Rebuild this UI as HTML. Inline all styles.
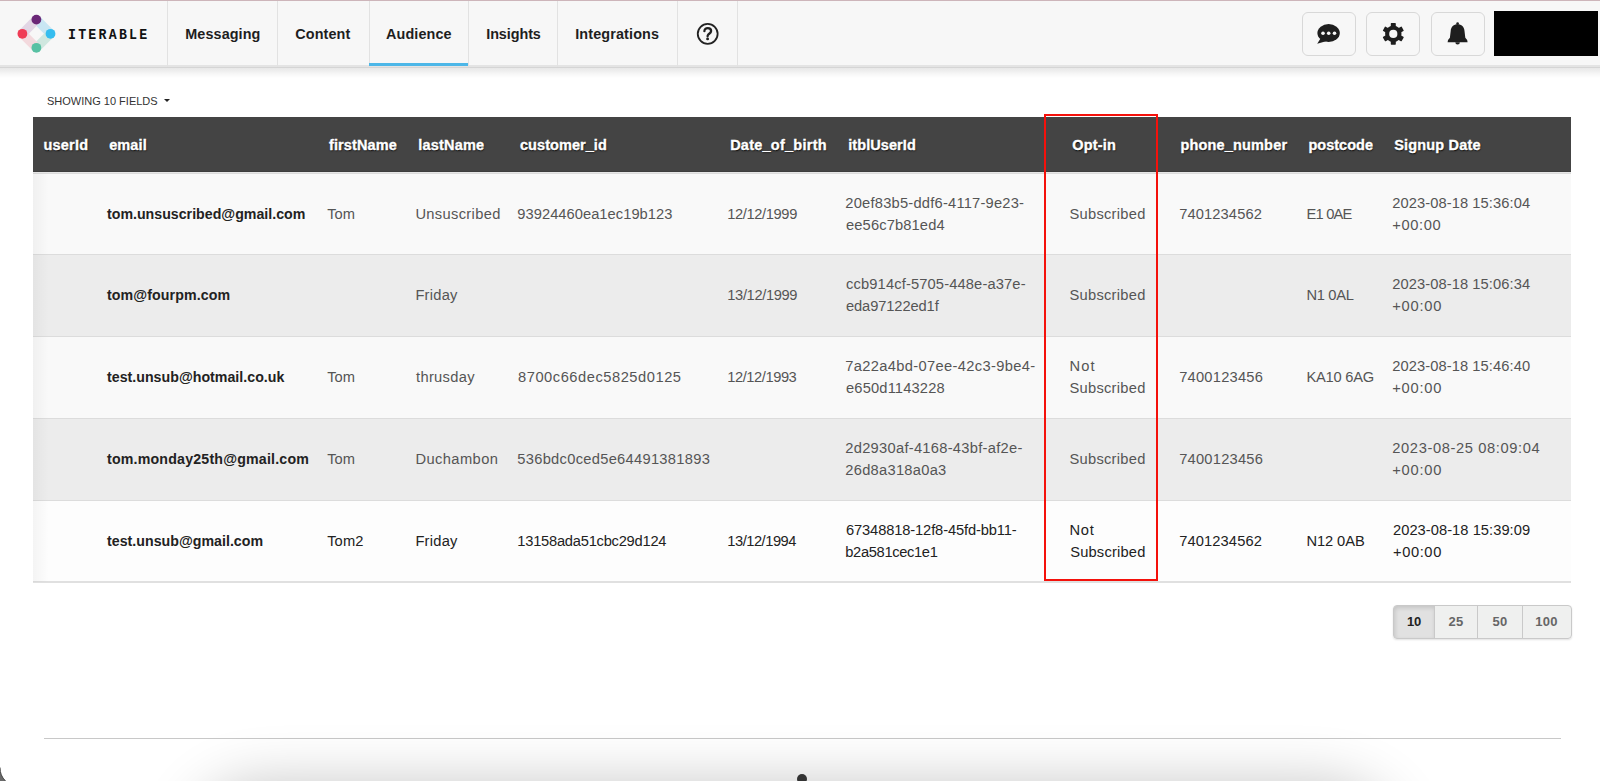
<!DOCTYPE html>
<html><head><meta charset="utf-8"><title>Iterable</title>
<style>
*{box-sizing:border-box}
html,body{margin:0;padding:0}
body{width:1600px;height:781px;overflow:hidden;position:relative;background:#fff;font-family:"Liberation Sans",sans-serif}
.topline{position:absolute;left:0;top:0;width:1600px;height:1px;background:#cdb5ba;z-index:5}
.nav{position:absolute;left:0;top:0;width:1600px;height:68px;background:#f7f7f7;border-bottom:1px solid #d5d5d5;box-shadow:inset 0 -2px 0 #e4e4e4}
.navsh{position:absolute;left:0;top:68px;width:1600px;height:10px;background:linear-gradient(#e8e8e8,#efefef 30%,#f7f7f7 60%,#fff)}
.dv{position:absolute;top:1px;width:1px;height:66px;background:#e2e2e2}
.n{position:absolute;white-space:nowrap;font-weight:bold;font-size:14.4px;line-height:20px;color:#1e1e1e}
.uline{position:absolute;left:369px;top:63px;width:99px;height:3.4px;background:#4db7e8}
.btn{position:absolute;top:12px;width:53.6px;height:43.8px;border:1px solid #d8d8d8;border-radius:6px;background:#f7f7f7}
.btn svg{position:absolute;left:0;top:0}
.blk{position:absolute;left:1494px;top:11px;width:104px;height:45px;background:#000}
.cap{position:absolute;left:47px;top:93.7px;font-size:11px;line-height:14px;color:#333;white-space:nowrap}
.hdr{position:absolute;left:33px;top:117px;width:1538px;height:55px;background:#444;border-bottom:1px solid #3d3d3d}
.hline{position:absolute;left:33px;top:172px;width:1538px;height:1px;background:#e6e6e6}
.h{position:absolute;white-space:nowrap;font-weight:bold;font-size:14.5px;line-height:20px;color:#fff;-webkit-text-stroke:0.35px #fff;text-shadow:0.5px 1px 1.5px rgba(0,0,0,0.95)}
.row{position:absolute;left:33px;width:1538px;border-top:1px solid #dcdcdc}
.lastb{position:absolute;left:33px;top:581px;width:1538px;height:2px;background:#e0e0e0}
.lshadow{position:absolute;left:33px;top:173px;width:16px;height:409px;background:linear-gradient(to right,rgba(0,0,0,0.035),rgba(0,0,0,0))}
.c{position:absolute;white-space:nowrap;font-size:14.7px;line-height:20px;color:#555}
.c.e{font-weight:bold;font-size:14.2px;color:#222}
.red{position:absolute;left:1044px;top:114px;width:114px;height:467px;border:2px solid #f4110b}
.pgw{position:absolute;left:1393px;top:604.5px;width:178.5px;height:34px;border-radius:4px;box-shadow:0 1px 2px rgba(0,0,0,0.12)}
.pg{position:absolute;top:604.5px;height:34px;border:1px solid #c9c9c9;background:#eff0ef;font-weight:bold;font-size:13px;letter-spacing:0.3px;color:#666;text-align:center;line-height:31px}
.bshadow{position:absolute;left:212px;top:805px;width:1163px;height:100px;border-radius:50px;box-shadow:0 0 60px 20px rgba(0,0,0,0.24)}
.bline{position:absolute;left:44px;top:738px;width:1517px;height:1px;background:#c8c8c8}
</style></head><body>
<div class="nav">
<div class="dv" style="left:167px"></div><div class="dv" style="left:277px"></div><div class="dv" style="left:369px"></div><div class="dv" style="left:468px"></div><div class="dv" style="left:557px"></div><div class="dv" style="left:677px"></div><div class="dv" style="left:737px"></div>
<svg style="position:absolute;left:14px;top:12px" width="46" height="44" viewBox="14 12 46 44">
  <g stroke-width="9.2" stroke-linecap="butt">
    <line x1="36.4" y1="19.6" x2="50.5" y2="33.8" stroke="#c9e6f3"/>
    <line x1="50.5" y1="33.8" x2="36.4" y2="47.8" stroke="#cfe7df"/>
    <line x1="36.4" y1="47.8" x2="22.4" y2="33.8" stroke="#f3d9dd"/>
    <line x1="22.4" y1="33.8" x2="36.4" y2="19.6" stroke="#e2d6e5"/>
  </g>
  <circle cx="36.4" cy="19.6" r="4.9" fill="#6a2777"/>
  <circle cx="50.5" cy="33.8" r="4.9" fill="#36bdef"/>
  <circle cx="36.4" cy="47.8" r="4.9" fill="#58c1a3"/>
  <circle cx="22.4" cy="33.8" r="4.9" fill="#ef3b55"/>
</svg>
<div style="position:absolute;left:67.6px;top:24.5px;font-family:'Liberation Mono',monospace;font-weight:bold;font-size:15.4px;line-height:20px;letter-spacing:2.6px;color:#111;white-space:nowrap;transform:scaleX(0.86);transform-origin:0 0"><span class="t">ITERABLE</span></div>
<div class="n" style="left:185.30px;top:23.91px;letter-spacing:0.087px"><span class="t">Messaging</span></div><div class="n" style="left:295.23px;top:23.91px;letter-spacing:0.117px"><span class="t">Content</span></div><div class="n" style="left:386.07px;top:23.91px;letter-spacing:0.100px"><span class="t">Audience</span></div><div class="n" style="left:486.23px;top:23.91px;letter-spacing:-0.075px"><span class="t">Insights</span></div><div class="n" style="left:575.23px;top:23.91px;letter-spacing:0.127px"><span class="t">Integrations</span></div>
<div class="uline"></div>
<svg style="position:absolute;left:696px;top:23px" width="23" height="23" viewBox="0 0 23 23">
  <circle cx="11.7" cy="10.85" r="9.95" fill="none" stroke="#222" stroke-width="1.8"/>
  <path d="M8.4 8.2 C8.4 6.1 9.9 5.1 11.7 5.1 C13.7 5.1 15.1 6.3 15.1 8 C15.1 9.9 13.3 10.5 12.3 11.5 C11.8 12 11.6 12.5 11.6 13.3" fill="none" stroke="#222" stroke-width="2.3" stroke-linecap="round"/>
  <circle cx="11.6" cy="15.9" r="1.45" fill="#222"/>
</svg>
<div class="btn" style="left:1302px"></div>
<div class="btn" style="left:1366px"></div>
<div class="btn" style="left:1431px"></div>
<div class="blk"></div>
<svg style="position:absolute;left:0;top:0;z-index:3" width="1600" height="68" viewBox="0 0 1600 68">
  <g fill="#1e1e1e">
    <ellipse cx="1328.6" cy="33" rx="11.2" ry="9"/>
    <path d="M1320.5 38.5 L1317.2 43.8 L1326 41.2 Z"/>
  </g>
  <g fill="#f7f7f7"><circle cx="1323" cy="33.2" r="1.8"/><circle cx="1328.7" cy="33.2" r="1.8"/><circle cx="1334.5" cy="33.2" r="1.8"/></g>
  <g fill="#1e1e1e" transform="translate(1393.3 33.9)">
    <circle r="8.2"/>
    <rect x="-2.5" y="-10.8" width="5" height="21.6" rx="0.6"/>
    <rect x="-2.5" y="-10.8" width="5" height="21.6" rx="0.6" transform="rotate(60)"/>
    <rect x="-2.5" y="-10.8" width="5" height="21.6" rx="0.6" transform="rotate(120)"/>
  </g>
  <circle cx="1393.3" cy="33.9" r="4.1" fill="#f7f7f7"/>
  <g fill="#1e1e1e">
    <circle cx="1457.6" cy="23.6" r="1.3"/>
    <path d="M1447.6 42.2 L1467.6 42.2 Q1467.8 40 1465.3 37.8 L1464.5 31 C1464.3 26.7 1461.4 24.2 1457.6 24.2 C1453.8 24.2 1450.9 26.7 1450.7 31 L1449.9 37.8 Q1447.4 40 1447.6 42.2 Z"/>
    <path d="M1455.3 42.2 A2.3 2.3 0 0 0 1459.9 42.2 Z"/>
  </g>
</svg>
</div>
<div class="navsh"></div>
<div class="topline"></div>
<div class="cap"><span class="t">SHOWING 10 FIELDS</span></div>
<div style="position:absolute;left:163.8px;top:98.6px;width:0;height:0;border-left:3.5px solid transparent;border-right:3.5px solid transparent;border-top:3.6px solid #222"></div>
<div class="hdr"></div>
<div class="hline"></div>
<div class="h" style="left:43.38px;top:134.68px;letter-spacing:0.245px"><span class="t">userId</span></div><div class="h" style="left:109.15px;top:134.68px;letter-spacing:0.132px"><span class="t">email</span></div><div class="h" style="left:328.93px;top:134.68px;letter-spacing:0.131px"><span class="t">firstName</span></div><div class="h" style="left:418.23px;top:134.68px;letter-spacing:0.200px"><span class="t">lastName</span></div><div class="h" style="left:520.00px;top:134.68px;letter-spacing:0.052px"><span class="t">customer_id</span></div><div class="h" style="left:730.15px;top:134.68px;letter-spacing:0.248px"><span class="t">Date_of_birth</span></div><div class="h" style="left:848.23px;top:134.68px;letter-spacing:0.074px"><span class="t">itblUserId</span></div><div class="h" style="left:1072.15px;top:134.68px;letter-spacing:0.210px"><span class="t">Opt-in</span></div><div class="h" style="left:1180.38px;top:134.68px;letter-spacing:0.175px"><span class="t">phone_number</span></div><div class="h" style="left:1308.38px;top:134.68px;letter-spacing:0.025px"><span class="t">postcode</span></div><div class="h" style="left:1394.15px;top:134.68px;letter-spacing:0.175px"><span class="t">Signup Date</span></div>
<div class="row" style="top:173px;height:81px;background:#f9f9f9"></div><div class="row" style="top:254px;height:82px;background:#ececec"></div><div class="row" style="top:336px;height:82px;background:#f9f9f9"></div><div class="row" style="top:418px;height:82px;background:#ececec"></div><div class="row" style="top:500px;height:82px;background:#fdfdfd"></div>
<div class="lastb"></div>
<div class="lshadow"></div>
<div class="c e" style="left:107.00px;top:203.83px"><span class="t">tom.unsuscribed@gmail.com</span></div><div class="c" style="left:327.15px;top:203.66px;color:#555;letter-spacing:0.087px"><span class="t">Tom</span></div><div class="c" style="left:415.38px;top:203.66px;color:#555;letter-spacing:0.333px"><span class="t">Unsuscribed</span></div><div class="c" style="left:517.30px;top:203.66px;color:#555;letter-spacing:0.039px"><span class="t">93924460ea1ec19b123</span></div><div class="c" style="left:727.30px;top:203.66px;color:#555;letter-spacing:-0.389px"><span class="t">12/12/1999</span></div><div class="c" style="left:845.30px;top:192.76px;color:#555;letter-spacing:0.219px"><span class="t">20ef83b5-ddf6-4117-9e23-</span></div><div class="c" style="left:846.00px;top:214.86px;color:#555;letter-spacing:0.127px"><span class="t">ee56c7b81ed4</span></div><div class="c" style="left:1069.45px;top:203.66px;color:#555;letter-spacing:0.272px"><span class="t">Subscribed</span></div><div class="c" style="left:1179.15px;top:203.66px;color:#555;letter-spacing:0.117px"><span class="t">7401234562</span></div><div class="c" style="left:1306.45px;top:203.66px;color:#555;letter-spacing:-0.770px"><span class="t">E1 0AE</span></div><div class="c" style="left:1392.30px;top:192.76px;color:#555;letter-spacing:0.078px"><span class="t">2023-08-18 15:36:04</span></div><div class="c" style="left:1392.30px;top:214.86px;color:#555;letter-spacing:0.630px"><span class="t">+00:00</span></div><div class="c e" style="left:107.00px;top:284.83px;letter-spacing:0.094px"><span class="t">tom@fourpm.com</span></div><div class="c" style="left:415.38px;top:284.66px;color:#555;letter-spacing:0.245px"><span class="t">Friday</span></div><div class="c" style="left:727.30px;top:284.66px;color:#555;letter-spacing:-0.369px"><span class="t">13/12/1999</span></div><div class="c" style="left:846.00px;top:273.76px;color:#555;letter-spacing:0.137px"><span class="t">ccb914cf-5705-448e-a37e-</span></div><div class="c" style="left:846.00px;top:295.86px;color:#555;letter-spacing:-0.111px"><span class="t">eda97122ed1f</span></div><div class="c" style="left:1069.45px;top:284.66px;color:#555;letter-spacing:0.272px"><span class="t">Subscribed</span></div><div class="c" style="left:1306.45px;top:284.66px;color:#555;letter-spacing:-0.315px"><span class="t">N1 0AL</span></div><div class="c" style="left:1392.30px;top:273.76px;color:#555;letter-spacing:0.078px"><span class="t">2023-08-18 15:06:34</span></div><div class="c" style="left:1392.30px;top:295.86px;color:#555;letter-spacing:0.735px"><span class="t">+00:00</span></div><div class="c e" style="left:107.00px;top:366.83px;letter-spacing:0.015px"><span class="t">test.unsub@hotmail.co.uk</span></div><div class="c" style="left:327.15px;top:366.66px;color:#555;letter-spacing:0.087px"><span class="t">Tom</span></div><div class="c" style="left:416.07px;top:366.66px;color:#555;letter-spacing:0.300px"><span class="t">thrusday</span></div><div class="c" style="left:518.00px;top:366.66px;color:#555;letter-spacing:0.525px"><span class="t">8700c66dec5825d0125</span></div><div class="c" style="left:727.30px;top:366.66px;color:#555;letter-spacing:-0.447px"><span class="t">12/12/1993</span></div><div class="c" style="left:845.30px;top:355.76px;color:#555;letter-spacing:0.335px"><span class="t">7a22a4bd-07ee-42c3-9be4-</span></div><div class="c" style="left:846.00px;top:377.86px;color:#555;letter-spacing:0.159px"><span class="t">e650d1143228</span></div><div class="c" style="left:1069.45px;top:355.76px;color:#555;letter-spacing:1.137px"><span class="t">Not</span></div><div class="c" style="left:1069.45px;top:377.86px;color:#555;letter-spacing:0.272px"><span class="t">Subscribed</span></div><div class="c" style="left:1179.15px;top:366.66px;color:#555;letter-spacing:0.233px"><span class="t">7400123456</span></div><div class="c" style="left:1306.45px;top:366.66px;color:#555;letter-spacing:-0.225px"><span class="t">KA10 6AG</span></div><div class="c" style="left:1392.30px;top:355.76px;color:#555;letter-spacing:0.078px"><span class="t">2023-08-18 15:46:40</span></div><div class="c" style="left:1392.30px;top:377.86px;color:#555;letter-spacing:0.735px"><span class="t">+00:00</span></div><div class="c e" style="left:107.00px;top:448.83px;letter-spacing:0.190px"><span class="t">tom.monday25th@gmail.com</span></div><div class="c" style="left:327.15px;top:448.66px;color:#555;letter-spacing:0.087px"><span class="t">Tom</span></div><div class="c" style="left:415.38px;top:448.66px;color:#555;letter-spacing:0.416px"><span class="t">Duchambon</span></div><div class="c" style="left:517.30px;top:448.66px;color:#555;letter-spacing:0.286px"><span class="t">536bdc0ced5e64491381893</span></div><div class="c" style="left:845.30px;top:437.76px;color:#555;letter-spacing:0.274px"><span class="t">2d2930af-4168-43bf-af2e-</span></div><div class="c" style="left:845.30px;top:459.86px;color:#555;letter-spacing:0.270px"><span class="t">26d8a318a0a3</span></div><div class="c" style="left:1069.45px;top:448.66px;color:#555;letter-spacing:0.272px"><span class="t">Subscribed</span></div><div class="c" style="left:1179.15px;top:448.66px;color:#555;letter-spacing:0.233px"><span class="t">7400123456</span></div><div class="c" style="left:1392.30px;top:437.76px;color:#555;letter-spacing:0.612px"><span class="t">2023-08-25 08:09:04</span></div><div class="c" style="left:1392.30px;top:459.86px;color:#555;letter-spacing:0.735px"><span class="t">+00:00</span></div><div class="c e" style="left:107.00px;top:530.83px;letter-spacing:0.018px"><span class="t">test.unsub@gmail.com</span></div><div class="c" style="left:327.15px;top:530.66px;color:#222;letter-spacing:0.117px"><span class="t">Tom2</span></div><div class="c" style="left:415.38px;top:530.66px;color:#222;letter-spacing:0.245px"><span class="t">Friday</span></div><div class="c" style="left:517.30px;top:530.66px;color:#222;letter-spacing:-0.243px"><span class="t">13158ada51cbc29d124</span></div><div class="c" style="left:727.30px;top:530.66px;color:#222;letter-spacing:-0.486px"><span class="t">13/12/1994</span></div><div class="c" style="left:846.00px;top:519.76px;color:#222;letter-spacing:-0.129px"><span class="t">67348818-12f8-45fd-bb11-</span></div><div class="c" style="left:845.30px;top:541.86px;color:#222;letter-spacing:-0.350px"><span class="t">b2a581cec1e1</span></div><div class="c" style="left:1069.45px;top:519.76px;color:#222;letter-spacing:0.787px"><span class="t">Not</span></div><div class="c" style="left:1070.15px;top:541.86px;color:#222;letter-spacing:0.194px"><span class="t">Subscribed</span></div><div class="c" style="left:1179.15px;top:530.66px;color:#222;letter-spacing:0.117px"><span class="t">7401234562</span></div><div class="c" style="left:1306.45px;top:530.66px;color:#222;letter-spacing:-0.087px"><span class="t">N12 0AB</span></div><div class="c" style="left:1393.00px;top:519.76px;color:#222;letter-spacing:0.039px"><span class="t">2023-08-18 15:39:09</span></div><div class="c" style="left:1393.00px;top:541.86px;color:#222;letter-spacing:0.595px"><span class="t">+00:00</span></div>
<div class="red"></div>
<div class="pgw"></div>
<div class="pg" style="left:1393px;width:42px;border-radius:4px 0 0 4px;background:#e1e1e1;color:#222;letter-spacing:-0.2px;box-shadow:inset 1px 2px 4px rgba(0,0,0,0.13)">10</div>
<div class="pg" style="left:1434px;width:44px;border-radius:0">25</div>
<div class="pg" style="left:1477px;width:46px;border-radius:0">50</div>
<div class="pg" style="left:1521.5px;width:50px;border-radius:0 4px 4px 0">100</div>
<div class="bline"></div>
<div class="bshadow"></div>
<div style="position:absolute;left:797.2px;top:774px;width:10px;height:10px;border-radius:50%;background:#333"></div>
<svg style="position:absolute;left:0;top:760px" width="20" height="21" viewBox="0 760 20 21"><path d="M0 767.5 A18.6 18.6 0 0 0 5.5 781 L0 781 Z" fill="#6a6a6a"/><path d="M0 767.5 A18.6 18.6 0 0 0 5.5 781" fill="none" stroke="#444" stroke-width="1"/></svg>
</body></html>
